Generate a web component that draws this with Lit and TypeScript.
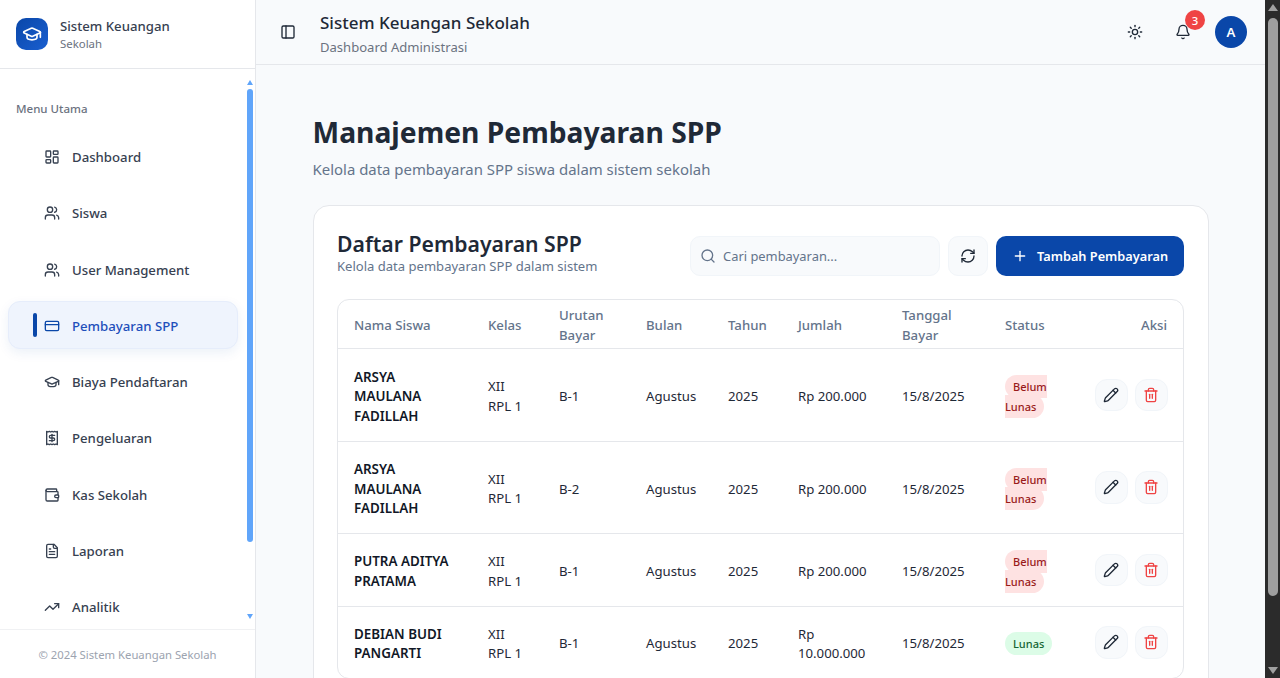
import { LitElement, html, css, svg } from 'lit';
import { customElement } from 'lit/decorators.js';

const ICONS: Record<string, unknown> = {
  dashboard: svg`<rect x="3" y="3" width="7" height="9" rx="1"/><rect x="14" y="3" width="7" height="5" rx="1"/><rect x="14" y="12" width="7" height="9" rx="1"/><rect x="3" y="16" width="7" height="5" rx="1"/>`,
  users: svg`<path d="M16 21v-2a4 4 0 0 0-4-4H6a4 4 0 0 0-4 4v2"/><circle cx="9" cy="7" r="4"/><path d="M22 21v-2a4 4 0 0 0-3-3.87"/><path d="M16 3.13a4 4 0 0 1 0 7.75"/>`,
  card: svg`<rect x="2" y="5" width="20" height="14" rx="2"/><path d="M2 10h20"/>`,
  cap: svg`<path d="M21.42 10.922a1 1 0 0 0-.019-1.838L12.83 5.18a2 2 0 0 0-1.66 0L2.6 9.08a1 1 0 0 0 0 1.832l8.57 3.908a2 2 0 0 0 1.66 0z"/><path d="M22 10v6"/><path d="M6 12.5V16a6 3 0 0 0 12 0v-3.5"/>`,
  receipt: svg`<path d="M4 2v20l2-1 2 1 2-1 2 1 2-1 2 1 2-1 2 1V2l-2 1-2-1-2 1-2-1-2 1-2-1-2 1Z"/><path d="M16 8h-6a2 2 0 1 0 0 4h4a2 2 0 1 1 0 4H8"/><path d="M12 17.5v-11"/>`,
  wallet: svg`<path d="M19 7V4a1 1 0 0 0-1-1H5a2 2 0 0 0 0 4h15a1 1 0 0 1 1 1v4h-3a2 2 0 0 0 0 4h3a1 1 0 0 0 1-1v-2a1 1 0 0 0-1-1"/><path d="M3 5v14a2 2 0 0 0 2 2h15a1 1 0 0 0 1-1v-4"/>`,
  file: svg`<path d="M15 2H6a2 2 0 0 0-2 2v16a2 2 0 0 0 2 2h12a2 2 0 0 0 2-2V7Z"/><path d="M14 2v4a2 2 0 0 0 2 2h4"/><path d="M10 9H8"/><path d="M16 13H8"/><path d="M16 17H8"/>`,
  trend: svg`<path d="M22 7 13.5 15.5l-5-5L2 17"/><path d="M16 7h6v6"/>`,
  panel: svg`<rect x="3" y="3" width="18" height="18" rx="2"/><path d="M9 3v18"/>`,
  sun: svg`<circle cx="12" cy="12" r="4"/><path d="M12 2v2"/><path d="M12 20v2"/><path d="m4.93 4.93 1.41 1.41"/><path d="m17.66 17.66 1.41 1.41"/><path d="M2 12h2"/><path d="M20 12h2"/><path d="m6.34 17.66-1.41 1.41"/><path d="m19.07 4.93-1.41 1.41"/>`,
  bell: svg`<path d="M10.268 21a2 2 0 0 0 3.464 0"/><path d="M3.262 15.326A1 1 0 0 0 4 17h16a1 1 0 0 0 .74-1.673C19.41 13.956 18 12.499 18 8A6 6 0 0 0 6 8c0 4.499-1.411 5.956-2.738 7.326"/>`,
  search: svg`<circle cx="11" cy="11" r="8"/><path d="m21 21-4.3-4.3"/>`,
  refresh: svg`<path d="M3 12a9 9 0 0 1 9-9 9.75 9.75 0 0 1 6.74 2.74L21 8"/><path d="M21 3v5h-5"/><path d="M21 12a9 9 0 0 1-9 9 9.75 9.75 0 0 1-6.74-2.74L3 16"/><path d="M8 16H3v5"/>`,
  plus: svg`<path d="M5 12h14"/><path d="M12 5v14"/>`,
  pencil: svg`<path d="M21.174 6.812a1 1 0 0 0-3.986-3.987L3.842 16.174a2 2 0 0 0-.5.83l-1.321 4.352a.5.5 0 0 0 .623.622l4.353-1.32a2 2 0 0 0 .83-.497z"/><path d="m15 5 4 4"/>`,
  trash: svg`<path d="M3 6h18"/><path d="M19 6v14c0 1-1 2-2 2H7c-1 0-2-1-2-2V6"/><path d="M8 6V4c0-1 1-2 2-2h4c1 0 2 1 2 2v2"/><path d="M10 11v6"/><path d="M14 11v6"/>`,
};

const icon = (name: string, size = 16) => html`<svg
  class="icon"
  width=${size}
  height=${size}
  viewBox="0 0 24 24"
  fill="none"
  stroke="currentColor"
  stroke-width="2"
  stroke-linecap="round"
  stroke-linejoin="round"
>${ICONS[name]}</svg>`;

const NAV = [
  { label: 'Dashboard', icon: 'dashboard' },
  { label: 'Siswa', icon: 'users' },
  { label: 'User Management', icon: 'users' },
  { label: 'Pembayaran SPP', icon: 'card', active: true },
  { label: 'Biaya Pendaftaran', icon: 'cap' },
  { label: 'Pengeluaran', icon: 'receipt' },
  { label: 'Kas Sekolah', icon: 'wallet' },
  { label: 'Laporan', icon: 'file' },
  { label: 'Analitik', icon: 'trend' },
];

const COLUMNS = ['Nama Siswa', 'Kelas', 'Urutan Bayar', 'Bulan', 'Tahun', 'Jumlah', 'Tanggal Bayar', 'Status', 'Aksi'];

const ROWS = [
  { name: 'ARSYA MAULANA FADILLAH', order: 'B-1', amount: 'Rp 200.000', paid: false },
  { name: 'ARSYA MAULANA FADILLAH', order: 'B-2', amount: 'Rp 200.000', paid: false },
  { name: 'PUTRA ADITYA PRATAMA', order: 'B-1', amount: 'Rp 200.000', paid: false },
  { name: 'DEBIAN BUDI PANGARTI', order: 'B-1', amount: 'Rp 10.000.000', paid: true },
];

@customElement('app-root')
export class AppRoot extends LitElement {
  static styles = css`
    :host {
      display: flex;
      width: 1280px;
      height: 678px;
      overflow: hidden;
      font-family: 'Noto Sans', sans-serif;
      color: #1f2937;
      background: #f8fafc;
    }
    .icon {
      display: block;
      flex: none;
    }

    /* sidebar */
    .sidebar {
      flex: none;
      width: 255px;
      display: flex;
      flex-direction: column;
      background: #fff;
      border-right: 1px solid #e5e7eb;
    }
    .brand {
      flex: none;
      height: 69px;
      box-sizing: border-box;
      display: flex;
      align-items: center;
      gap: 12px;
      padding: 0 16px;
      border-bottom: 1px solid #e5e7eb;
    }
    .logo {
      width: 32px;
      height: 32px;
      border-radius: 10px;
      display: flex;
      align-items: center;
      justify-content: center;
      color: #fff;
      background: linear-gradient(135deg, #0a47a9, #1a5fd0);
    }
    .brand-name {
      font-size: 13.2px;
      line-height: 20px;
      font-weight: 500;
      color: #374151;
    }
    .brand-sub {
      font-size: 11.4px;
      line-height: 16px;
      color: #6b7280;
    }
    .nav-area {
      flex: 1;
      min-height: 0;
      display: flex;
    }
    .nav {
      flex: 1;
      min-width: 0;
      overflow: hidden;
      padding: 32px 8px 0;
    }
    .nav-title {
      font-size: 11.5px;
      line-height: 16px;
      font-weight: 500;
      color: #6b7280;
      padding: 0 8px;
      margin-bottom: 15px;
    }
    .nav-list {
      display: flex;
      flex-direction: column;
      gap: 8px;
    }
    .nav-item {
      position: relative;
      height: 48.25px;
      flex: none;
      box-sizing: border-box;
      display: flex;
      align-items: center;
      gap: 12px;
      padding: 2px 0 0 35px;
      border-radius: 12px;
      border: 1px solid transparent;
      font-size: 13.2px;
      font-weight: 500;
      color: #374151;
    }
    .nav-item.active {
      background: #eff4fd;
      border-color: #e6edfb;
      color: #1e4fbb;
      box-shadow: 0 4px 12px rgba(10, 71, 169, 0.08);
    }
    .nav-item.active .icon {
      color: #0a47a9;
    }
    .nav-item.active::before {
      content: '';
      position: absolute;
      left: 24px;
      top: 11px;
      width: 4px;
      height: 24px;
      border-radius: 2px;
      background: #0a47a9;
    }
    .nav-scroll {
      flex: none;
      width: 6px;
      margin: 0 2px 0 1px;
      display: flex;
      flex-direction: column;
      align-items: center;
    }
    .nav-thumb {
      width: 6px;
      height: 453px;
      margin-top: 4px;
      border-radius: 3px;
      background: #60a5fa;
    }
    .arrow-up {
      margin-top: 11px;
      border: 3px solid transparent;
      border-top: 0;
      border-bottom: 5px solid #60a5fa;
    }
    .arrow-down {
      margin-top: 72px;
      border: 3px solid transparent;
      border-bottom: 0;
      border-top: 5px solid #60a5fa;
    }
    .copyright {
      flex: none;
      height: 49px;
      box-sizing: border-box;
      border-top: 1px solid #f0f1f3;
      display: flex;
      align-items: center;
      justify-content: center;
      font-size: 11.3px;
      color: #9ca3af;
    }

    /* top bar */
    .content {
      flex: 1;
      min-width: 0;
      display: flex;
      flex-direction: column;
    }
    .topbar {
      flex: none;
      height: 65px;
      box-sizing: border-box;
      display: flex;
      align-items: center;
      padding: 0 18px 0 24px;
      border-bottom: 1px solid #e5e7eb;
      color: #1f2937;
    }
    .topbar-titles {
      margin: 2px 0 0 24px;
      flex: 1;
    }
    .topbar-title {
      font-size: 17px;
      line-height: 28px;
      font-weight: 500;
      color: #1f2937;
    }
    .topbar-sub {
      font-size: 13.05px;
      line-height: 20px;
      color: #6b7280;
    }
    .topbar-tools {
      display: flex;
      align-items: center;
      gap: 32px;
    }
    .bell {
      position: relative;
    }
    .badge {
      position: absolute;
      top: -14px;
      left: 10px;
      width: 20px;
      height: 20px;
      border-radius: 50%;
      display: flex;
      align-items: center;
      justify-content: center;
      background: #ef4444;
      color: #fff;
      font-size: 11.3px;
      font-weight: 500;
    }
    .avatar {
      width: 32px;
      height: 32px;
      margin-left: -8px;
      border-radius: 50%;
      display: flex;
      align-items: center;
      justify-content: center;
      background: #0a47a9;
      color: #fff;
      font-size: 13.2px;
      font-weight: 600;
    }

    /* main */
    .main {
      flex: 1;
      min-height: 0;
      overflow: hidden;
      padding: 47px 56.5px 0;
    }
    h1 {
      margin: 0;
      font-size: 28.25px;
      line-height: 40px;
      font-weight: 700;
      color: #1f2937;
    }
    .lead {
      margin: 5px 0 0;
      font-size: 14.93px;
      line-height: 24px;
      color: #64748b;
    }
    .card {
      margin-top: 24px;
      background: #fff;
      border: 1px solid #e5e7eb;
      border-radius: 16px;
      padding: 24px 23.5px;
    }
    .card-head {
      display: flex;
      align-items: flex-start;
      margin-bottom: 24px;
      height: 45px;
    }
    .card-titles {
      flex: 1;
      padding-top: 2px;
    }
    h2 {
      margin: 0;
      font-size: 21.2px;
      line-height: 24px;
      font-weight: 600;
      color: #1f2937;
    }
    .card-sub {
      margin-top: 2px;
      font-size: 13.05px;
      line-height: 16px;
      color: #64748b;
    }
    .tools {
      display: flex;
      gap: 8px;
      margin-top: 6px;
    }
    .search {
      width: 250px;
      height: 40px;
      box-sizing: border-box;
      display: flex;
      align-items: center;
      gap: 7px;
      padding-left: 9px;
      border: 1px solid #f1f5f9;
      border-radius: 10px;
      background: #f8fafc;
      font-size: 12.9px;
      color: #64748b;
    }
    .square {
      width: 40px;
      height: 40px;
      box-sizing: border-box;
      display: flex;
      align-items: center;
      justify-content: center;
      border: 1px solid #f1f5f9;
      border-radius: 10px;
      background: #f8fafc;
      color: #1f2937;
    }
    .add {
      height: 40px;
      width: 188px;
      box-sizing: border-box;
      display: flex;
      align-items: center;
      gap: 9px;
      padding-left: 16px;
      border-radius: 10px;
      background: #0a47a9;
      color: #fff;
      font-size: 12.75px;
      font-weight: 600;
    }

    .table-wrap {
      border: 1px solid #e5e7eb;
      border-radius: 12px;
      overflow: hidden;
    }
    table {
      width: 100%;
      table-layout: fixed;
      border-collapse: collapse;
      font-size: 13.2px;
      line-height: 19.75px;
    }
    th {
      height: 48px;
      padding: 6px 16px 2px;
      box-sizing: border-box;
      text-align: left;
      font-weight: 500;
      color: #64748b;
      border-bottom: 1px solid #e5e7eb;
    }
    td {
      padding: 18px 16px 14px;
      color: #1f2937;
      border-bottom: 1px solid #e5e7eb;
    }
    tbody tr:first-child td {
      padding-top: 19px;
    }
    tr:last-child td {
      border-bottom: 0;
    }
    .c1 { width: 134px; }
    .c2 { width: 71px; }
    .c3 { width: 87px; }
    .c4 { width: 82px; }
    .c5 { width: 70px; }
    .c6 { width: 104px; }
    .c7 { width: 103px; }
    .c8 { width: 90px; }
    .c9 { text-align: right; }
    .name {
      font-size: 13.4px;
      font-weight: 600;
      color: #111827;
    }
    .status {
      padding: 4px 8px;
      border-radius: 999px;
      font-size: 11px;
      line-height: 1;
      font-weight: 500;
      background: #fee2e2;
      color: #991b1b;
    }
    .status.paid {
      background: #dcfce7;
      color: #166534;
    }
    .actions {
      display: flex;
      justify-content: flex-end;
      gap: 7.5px;
      margin: -4px -0.5px 0 0;
    }
    .action {
      width: 32.5px;
      height: 32.5px;
      box-sizing: border-box;
      display: flex;
      align-items: center;
      justify-content: center;
      border: 1px solid #f1f5f9;
      border-radius: 12px;
      background: #f8fafc;
      color: #1f2937;
    }
    .action.danger {
      color: #ef4444;
    }

    /* browser scrollbar */
    .page-scroll {
      flex: none;
      width: 15px;
      background: #2b2b2b;
      display: flex;
      flex-direction: column;
      align-items: center;
    }
    .page-up {
      margin-top: 4px;
      border: 5px solid transparent;
      border-top: 0;
      border-bottom: 7px solid #a0a0a0;
    }
    .page-thumb {
      width: 10px;
      height: 578px;
      margin-top: 7px;
      border-radius: 5px;
      background: #9f9f9f;
    }
    .page-down {
      margin-top: auto;
      margin-bottom: 4px;
      border: 5px solid transparent;
      border-bottom: 0;
      border-top: 7px solid #a0a0a0;
    }
  `;

  private _renderSidebar() {
    return html`
      <aside class="sidebar">
        <div class="brand">
          <div class="logo">${icon('cap', 20)}</div>
          <div>
            <div class="brand-name">Sistem Keuangan</div>
            <div class="brand-sub">Sekolah</div>
          </div>
        </div>
        <div class="nav-area">
          <nav class="nav">
            <div class="nav-title">Menu Utama</div>
            <div class="nav-list">
              ${NAV.map(
                (item) => html`
                  <div class="nav-item ${item.active ? 'active' : ''}">
                    ${icon(item.icon)}<span>${item.label}</span>
                  </div>
                `,
              )}
            </div>
          </nav>
          <div class="nav-scroll">
            <div class="arrow-up"></div>
            <div class="nav-thumb"></div>
            <div class="arrow-down"></div>
          </div>
        </div>
        <div class="copyright">© 2024 Sistem Keuangan Sekolah</div>
      </aside>
    `;
  }

  private _renderTable() {
    return html`
      <div class="table-wrap">
        <table>
          <thead>
            <tr>${COLUMNS.map((c, i) => html`<th class="c${i + 1}">${c}</th>`)}</tr>
          </thead>
          <tbody>
            ${ROWS.map(
              (r) => html`
                <tr>
                  <td class="name">${r.name}</td>
                  <td>XII RPL 1</td>
                  <td>${r.order}</td>
                  <td>Agustus</td>
                  <td>2025</td>
                  <td>${r.amount}</td>
                  <td>15/8/2025</td>
                  <td>
                    <span class="status ${r.paid ? 'paid' : ''}">${r.paid ? 'Lunas' : 'Belum Lunas'}</span>
                  </td>
                  <td>
                    <div class="actions">
                      <div class="action">${icon('pencil')}</div>
                      <div class="action danger">${icon('trash')}</div>
                    </div>
                  </td>
                </tr>
              `,
            )}
          </tbody>
        </table>
      </div>
    `;
  }

  render() {
    return html`
      ${this._renderSidebar()}
      <div class="content">
        <header class="topbar">
          ${icon('panel')}
          <div class="topbar-titles">
            <div class="topbar-title">Sistem Keuangan Sekolah</div>
            <div class="topbar-sub">Dashboard Administrasi</div>
          </div>
          <div class="topbar-tools">
            ${icon('sun')}
            <div class="bell">
              ${icon('bell')}
              <span class="badge">3</span>
            </div>
            <div class="avatar">A</div>
          </div>
        </header>
        <main class="main">
          <h1>Manajemen Pembayaran SPP</h1>
          <p class="lead">Kelola data pembayaran SPP siswa dalam sistem sekolah</p>
          <section class="card">
            <div class="card-head">
              <div class="card-titles">
                <h2>Daftar Pembayaran SPP</h2>
                <div class="card-sub">Kelola data pembayaran SPP dalam sistem</div>
              </div>
              <div class="tools">
                <div class="search">${icon('search')}<span>Cari pembayaran...</span></div>
                <div class="square">${icon('refresh')}</div>
                <div class="add">${icon('plus')}<span>Tambah Pembayaran</span></div>
              </div>
            </div>
            ${this._renderTable()}
          </section>
        </main>
      </div>
      <div class="page-scroll">
        <div class="page-up"></div>
        <div class="page-thumb"></div>
        <div class="page-down"></div>
      </div>
    `;
  }
}
